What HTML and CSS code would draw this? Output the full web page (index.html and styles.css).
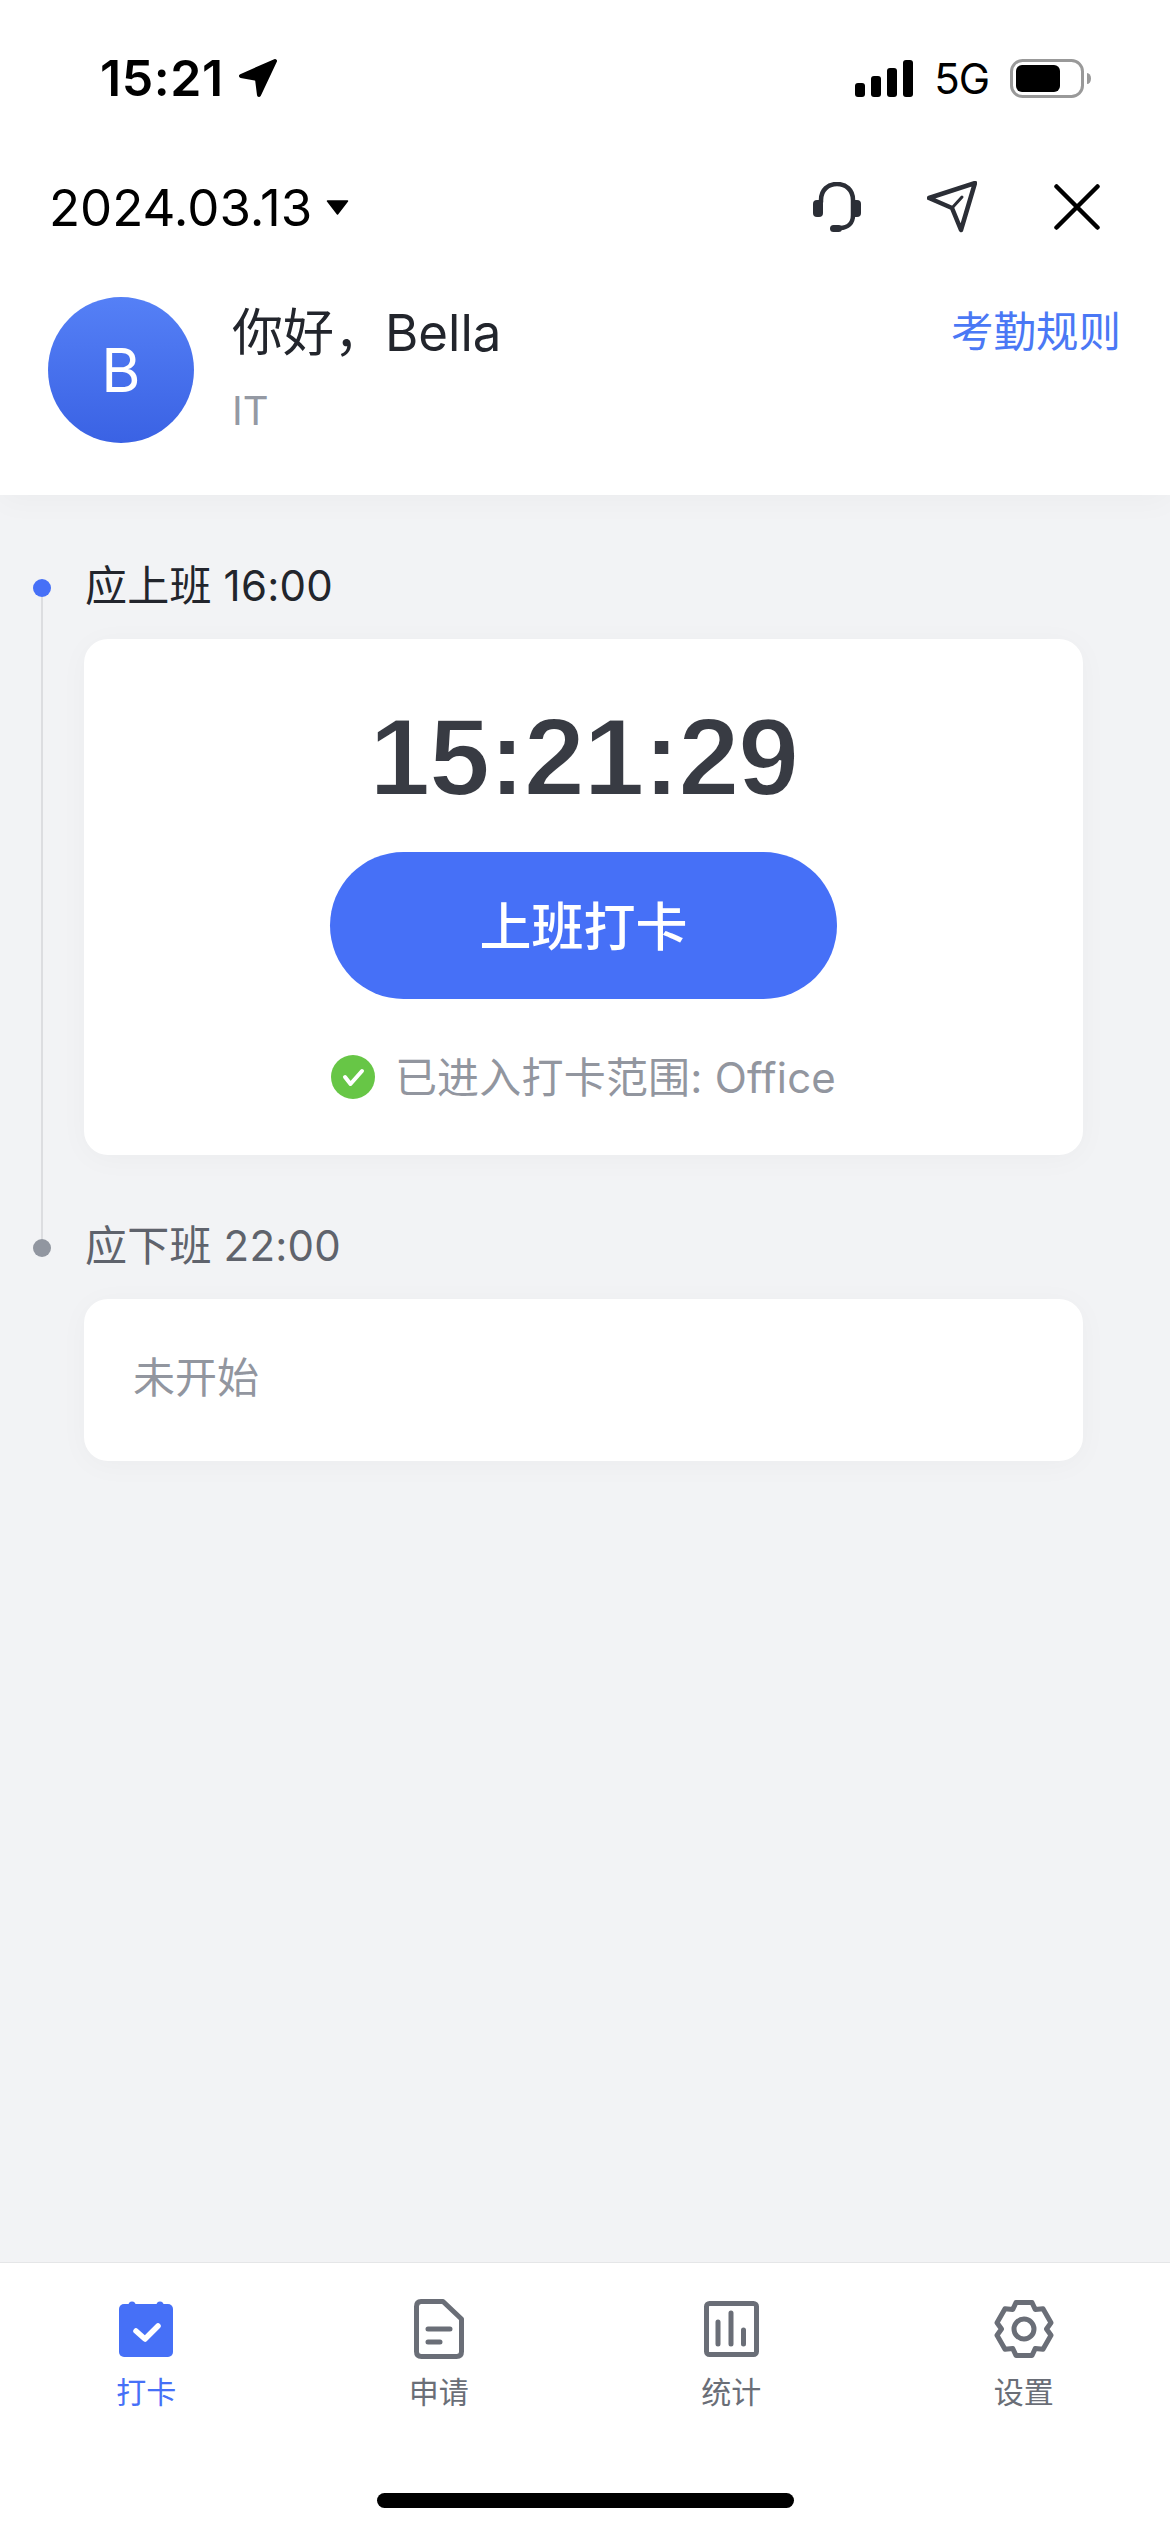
FILE: index.html
```html
<!DOCTYPE html>
<html lang="zh-CN">
<head>
    <meta charset="UTF-8">
    <meta name="viewport" content="width=device-width, initial-scale=1.0">
    <title>考勤打卡</title>
    <link rel="stylesheet" href="styles.css">
</head>
<body>
    <div class="app">
        <header class="header">
            <div class="status-bar">
                <div class="status-left">
                    <span class="clock">15:21</span>
                    <svg class="arrow-icon" width="40" height="40" viewBox="0 0 40 40"><path d="M37 3 L3 18 L19 21 L21 37 Z"/></svg>
                </div>
                <div class="status-right">
                    <svg width="58" height="37" viewBox="0 0 58 37">
                        <rect x="0" y="23" width="10" height="14" rx="3"/>
                        <rect x="16" y="16" width="10" height="21" rx="3"/>
                        <rect x="32" y="8" width="10" height="29" rx="3"/>
                        <rect x="48" y="0" width="10" height="37" rx="3"/>
                    </svg>
                    <span class="network">5G</span>
                    <svg width="81" height="39" viewBox="0 0 81 39">
                        <rect x="1.5" y="1.5" width="71" height="36" rx="11" fill="none" stroke="#999" stroke-width="3"/>
                        <rect x="6" y="6" width="44" height="27" rx="6"/>
                        <path d="M77 14 a4 5.5 0 0 1 0 11 Z" fill="#999"/>
                    </svg>
                </div>
            </div>

            <div class="toolbar">
                <div class="date-picker">
                    <span>2024.03.13</span>
                    <svg width="23" height="15" viewBox="0 0 23 15"><path d="M1.5 1 H21.5 L11.5 14 Z" stroke="#000" stroke-width="1.5" stroke-linejoin="round"/></svg>
                </div>
                <div class="toolbar-actions">
                    <svg class="headset" width="48" height="50" viewBox="0 0 48 50">
                        <path class="dark-line" d="M8 20 V18 C8 8 15 2 24 2 C33 2 40 8 40 18 V33 C40 41 35 46 27 46 H22"/>
                        <rect class="dark-fill" x="0" y="18" width="10" height="17" rx="4"/>
                        <rect class="dark-fill" x="38" y="18" width="10" height="17" rx="4"/>
                        <rect class="dark-fill" x="17" y="43" width="12" height="7" rx="3.5"/>
                    </svg>
                    <svg class="plane" width="50" height="52" viewBox="0 0 50 52">
                        <path class="dark-line" d="M2 17 L48 2 L34 49 L25 27 Z"/>
                        <path class="dark-line thin" d="M25 27 L35 16"/>
                    </svg>
                    <svg class="close" width="46" height="46" viewBox="0 0 46 46">
                        <path d="M2.5 2.5 L43.5 43.5 M43.5 2.5 L2.5 43.5"/>
                    </svg>
                </div>
            </div>

            <div class="user-row">
                <div class="avatar">B</div>
                <div class="user-info">
                    <div class="user-name">你好，Bella</div>
                    <div class="user-dept">IT</div>
                </div>
                <a class="rules-link">考勤规则</a>
            </div>
        </header>

        <main class="timeline">
            <section class="shift shift-active">
                <div class="shift-label">
                    <span class="dot"></span>
                    <span class="raised">应上班 16:00</span>
                </div>
                <div class="card punch-card">
                    <div class="punch-time">15:21:29</div>
                    <button class="punch-btn">上班打卡</button>
                    <div class="punch-range">
                        <svg width="44" height="44" viewBox="0 0 44 44">
                            <circle cx="22" cy="22" r="22" fill="#67c646"/>
                            <path d="M14 22 L19.500 29 L31 16" fill="none" stroke="#fff" stroke-width="4" stroke-linecap="round" stroke-linejoin="round"/>
                        </svg>
                        <span class="raised">已进入打卡范围: Office</span>
                    </div>
                </div>
            </section>

            <section class="shift">
                <div class="shift-label">
                    <span class="dot"></span>
                    <span class="raised">应下班 22:00</span>
                </div>
                <div class="card idle-card">未开始</div>
            </section>
        </main>

        <nav class="tabbar">
            <div class="tabs">
                <div class="tab tab-active">
                    <svg width="60" height="60" viewBox="0 0 60 60">
                        <circle class="blue-fill" cx="16" cy="6" r="3.500"/>
                        <circle class="blue-fill" cx="44" cy="6" r="3.500"/>
                        <rect class="blue-fill" x="3" y="5" width="54" height="53" rx="5"/>
                        <path d="M20 32 L29 40 L42 27" fill="none" stroke="#fff" stroke-width="5.500" stroke-linecap="round" stroke-linejoin="round"/>
                    </svg>
                    <span>打卡</span>
                </div>
                <div class="tab">
                    <svg class="tab-line" width="60" height="60" viewBox="0 0 60 60">
                        <path d="M12 2.500 H34 L52.500 20 V52.500 Q52.500 57.500 47.500 57.500 H12.500 Q7.500 57.500 7.500 52.500 V7.500 Q7.500 2.500 12 2.500 Z"/>
                        <path d="M19 30 H41 M19 43 H31"/>
                    </svg>
                    <span>申请</span>
                </div>
                <div class="tab">
                    <svg class="tab-line" width="60" height="60" viewBox="0 0 60 60">
                        <rect x="5.500" y="4.500" width="50" height="51" rx="3"/>
                        <path d="M17 23 V45 M30 14 V45 M42.500 31 V45"/>
                    </svg>
                    <span>统计</span>
                </div>
                <div class="tab">
                    <svg class="tab-line" width="60" height="60" viewBox="-30 -30 60 60">
                        <path d="M-8 -26.500 L8 -26.500 L11.250 -19.500 L19 -20.200 L27 -6.300 L22.500 0 L27 6.300 L19 20.200 L11.250 19.500 L8 26.500 L-8 26.500 L-11.250 19.500 L-19 20.200 L-27 6.300 L-22.500 0 L-27 -6.300 L-19 -20.200 L-11.250 -19.500 Z"/>
                        <circle cx="0" cy="0" r="10"/>
                    </svg>
                    <span>设置</span>
                </div>
            </div>
            <div class="home-bar"></div>
        </nav>
    </div>
</body>
</html>
```
FILE: styles.css
```css
* {
    box-sizing: border-box;
}
body {
    margin: 0;
    font-family: Inter, 'Noto Sans CJK SC', sans-serif;
    background: #f2f3f5;
}
svg {
    display: block;
    flex: none;
}
.app {
    width: 1170px;
    height: 2532px;
    display: flex;
    flex-direction: column;
    overflow: hidden;
}
.raised {
    padding-bottom: 6px;
}

/* header */
.header {
    position: relative;
    background: white;
    padding-bottom: 52px;
    box-shadow: 0 6px 30px rgba(0,0,0,0.03);
}
.status-bar {
    height: 156px;
    padding: 0 79px 0 100px;
    display: flex;
    justify-content: space-between;
    align-items: center;
}
.status-left {
    display: flex;
    align-items: center;
    gap: 14px;
}
.clock {
    font-size: 50px;
    font-weight: 600;
    letter-spacing: 0.6px;
    color: #000;
}
.arrow-icon path {
    stroke: #000;
    stroke-width: 4;
    stroke-linejoin: round;
}
.status-right {
    display: flex;
    align-items: center;
    gap: 21px;
}
.network {
    font-size: 42px;
    letter-spacing: -1px;
    color: #000;
}
.toolbar {
    height: 102px;
    padding: 0 70px 0 49px;
    display: flex;
    justify-content: space-between;
    align-items: center;
}
.date-picker {
    display: flex;
    align-items: center;
    gap: 14px;
    font-size: 51px;
    color: #000;
}
.toolbar-actions {
    display: flex;
    align-items: center;
    gap: 66px;
}
.toolbar-actions .plane {
    margin-right: 11px;
}
.dark-line {
    fill: none;
    stroke: #2b2e36;
    stroke-width: 4.5;
    stroke-linejoin: round;
    stroke-linecap: round;
}
.dark-line.thin {
    stroke-width: 3;
}
.dark-fill {
    fill: #2b2e36;
}
.close path {
    fill: none;
    stroke: #000;
    stroke-width: 4.5;
    stroke-linecap: round;
}
.user-row {
    margin-top: 39px;
    padding: 0 49px 0 48px;
    display: flex;
    align-items: flex-start;
}
.avatar {
    width: 146px;
    height: 146px;
    border-radius: 50%;
    background: linear-gradient(180deg, #5580f6, #3a62e4);
    color: white;
    font-size: 60px;
    display: flex;
    justify-content: center;
    align-items: center;
}
.user-info {
    margin-left: 38px;
    flex: 1;
}
.user-name {
    font-size: 51px;
    line-height: 72px;
    color: #22252c;
}
.user-dept {
    margin-top: 17px;
    font-size: 40px;
    line-height: 50px;
    color: #9499a3;
}
.rules-link {
    margin-top: 4px;
    font-size: 42.5px;
    line-height: 62px;
    color: #4a78f5;
}

/* timeline */
.timeline {
    flex: 1;
    padding-top: 60px;
}
.shift {
    position: relative;
    margin-bottom: 60px;
}
.shift-active::before {
    content: "";
    position: absolute;
    left: 41px;
    top: 42px;
    bottom: -84px;
    width: 2px;
    background: #dcdde0;
}
.shift-label {
    height: 60px;
    padding-left: 33px;
    display: flex;
    align-items: center;
    gap: 34px;
    font-size: 42px;
    letter-spacing: 0.2px;
    color: #5f636c;
}
.shift-active .shift-label {
    color: #22252c;
}
.dot {
    width: 18px;
    height: 18px;
    margin-top: 6px;
    border-radius: 50%;
    background: #9196a0;
}
.shift-active .dot {
    background: #4670f7;
}
.card {
    width: 999px;
    margin: 24px 0 0 84px;
    background: white;
    border-radius: 24px;
    box-shadow: 0 4px 30px rgba(0,0,0,0.03);
}
.punch-card {
    padding: 58px 0 53px;
    display: flex;
    flex-direction: column;
    align-items: center;
}
.punch-time {
    font-family: 'Liberation Sans', Arial, sans-serif;
    font-size: 110px;
    font-weight: bold;
    line-height: 120px;
    letter-spacing: -1.5px;
    color: #383b43;
    -webkit-text-stroke: 2px white;
}
.punch-btn {
    width: 507px;
    height: 147px;
    margin-top: 35px;
    padding-bottom: 6px;
    border: none;
    border-radius: 74px;
    background: #4670f7;
    color: white;
    font-family: inherit;
    font-size: 52px;
    font-weight: 500;
}
.punch-range {
    height: 50px;
    margin-top: 53px;
    display: flex;
    align-items: center;
    gap: 20px;
    font-size: 42px;
    letter-spacing: 0.2px;
    color: #92969f;
}
.idle-card {
    height: 162px;
    padding: 0 49px 12px;
    display: flex;
    align-items: center;
    font-size: 42px;
    color: #92969f;
}

/* tab bar */
.tabbar {
    height: 270px;
    background: white;
    border-top: 1px solid #e5e6e8;
    padding-top: 36px;
}
.tabs {
    display: grid;
    grid-template-columns: repeat(4, 1fr);
}
.tab {
    display: flex;
    flex-direction: column;
    align-items: center;
    gap: 15px;
    font-size: 30px;
    line-height: 36px;
    color: #6a6e77;
}
.tab-active {
    color: #4670f7;
}
.blue-fill {
    fill: #4670f7;
}
.tab-line * {
    fill: none;
    stroke: #6a6e77;
    stroke-width: 5;
    stroke-linecap: round;
    stroke-linejoin: round;
}
.home-bar {
    width: 417px;
    height: 15px;
    margin: 83px auto 0;
    border-radius: 8px;
    background: #000;
}
```
